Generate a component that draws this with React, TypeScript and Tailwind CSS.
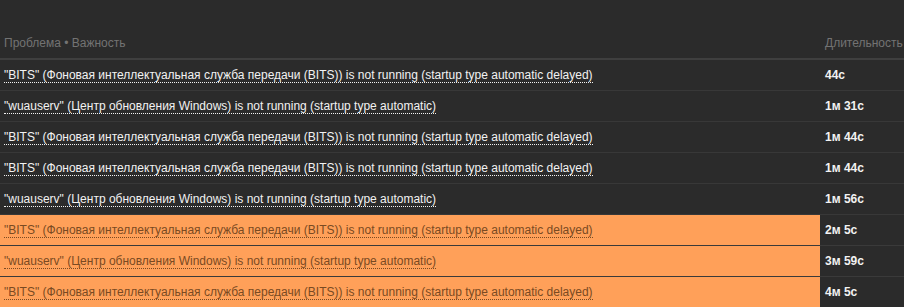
import React from "react";

const rows: { text: string; dur: string; sev: boolean }[] = [
  { text: '"BITS" (Фоновая интеллектуальная служба передачи (BITS)) is not running (startup type automatic delayed)', dur: "44с", sev: false },
  { text: '"wuauserv" (Центр обновления Windows) is not running (startup type automatic)', dur: "1м 31с", sev: false },
  { text: '"BITS" (Фоновая интеллектуальная служба передачи (BITS)) is not running (startup type automatic delayed)', dur: "1м 44с", sev: false },
  { text: '"BITS" (Фоновая интеллектуальная служба передачи (BITS)) is not running (startup type automatic delayed)', dur: "1м 44с", sev: false },
  { text: '"wuauserv" (Центр обновления Windows) is not running (startup type automatic)', dur: "1м 56с", sev: false },
  { text: '"BITS" (Фоновая интеллектуальная служба передачи (BITS)) is not running (startup type automatic delayed)', dur: "2м 5с", sev: true },
  { text: '"wuauserv" (Центр обновления Windows) is not running (startup type automatic)', dur: "3м 59с", sev: true },
  { text: '"BITS" (Фоновая интеллектуальная служба передачи (BITS)) is not running (startup type automatic delayed)', dur: "4м 5с", sev: true },
];

export default function App() {
  return (
    <div
      className="w-[904px] h-[307px] overflow-hidden bg-[#2b2b2b] text-[12px] leading-[14px]"
      style={{ fontFamily: '"Liberation Sans", Arial, sans-serif' }}
    >
      <div className="flex h-[60px] items-end border-b-2 border-[#3f3f3f] text-[#737373]">
        <div className="w-[820px] pl-[4px] pb-[8px]">Проблема • Важность</div>
        <div className="flex-1 pl-[5px] pb-[8px] whitespace-nowrap overflow-hidden">Длительность</div>
      </div>
      {rows.map((r, i) => (
        <div key={i} className={`flex h-[31px] border-b ${r.sev ? "border-[#3a3a3a]" : "border-[#383838]"}`}>
          <div className={`w-[820px] flex items-center pl-[4px] ${r.sev ? "bg-[#ffa059] text-[#7a4a22]" : "text-[#f2f2f2]"}`}>
            <span className={`border-b border-dotted ${r.sev ? "border-[#7a4a22]" : "border-[#f2f2f2]"}`}>{r.text}</span>
          </div>
          <div className="flex-1 flex items-center pl-[5px] font-bold text-[#f2f2f2]">{r.dur}</div>
        </div>
      ))}
    </div>
  );
}
